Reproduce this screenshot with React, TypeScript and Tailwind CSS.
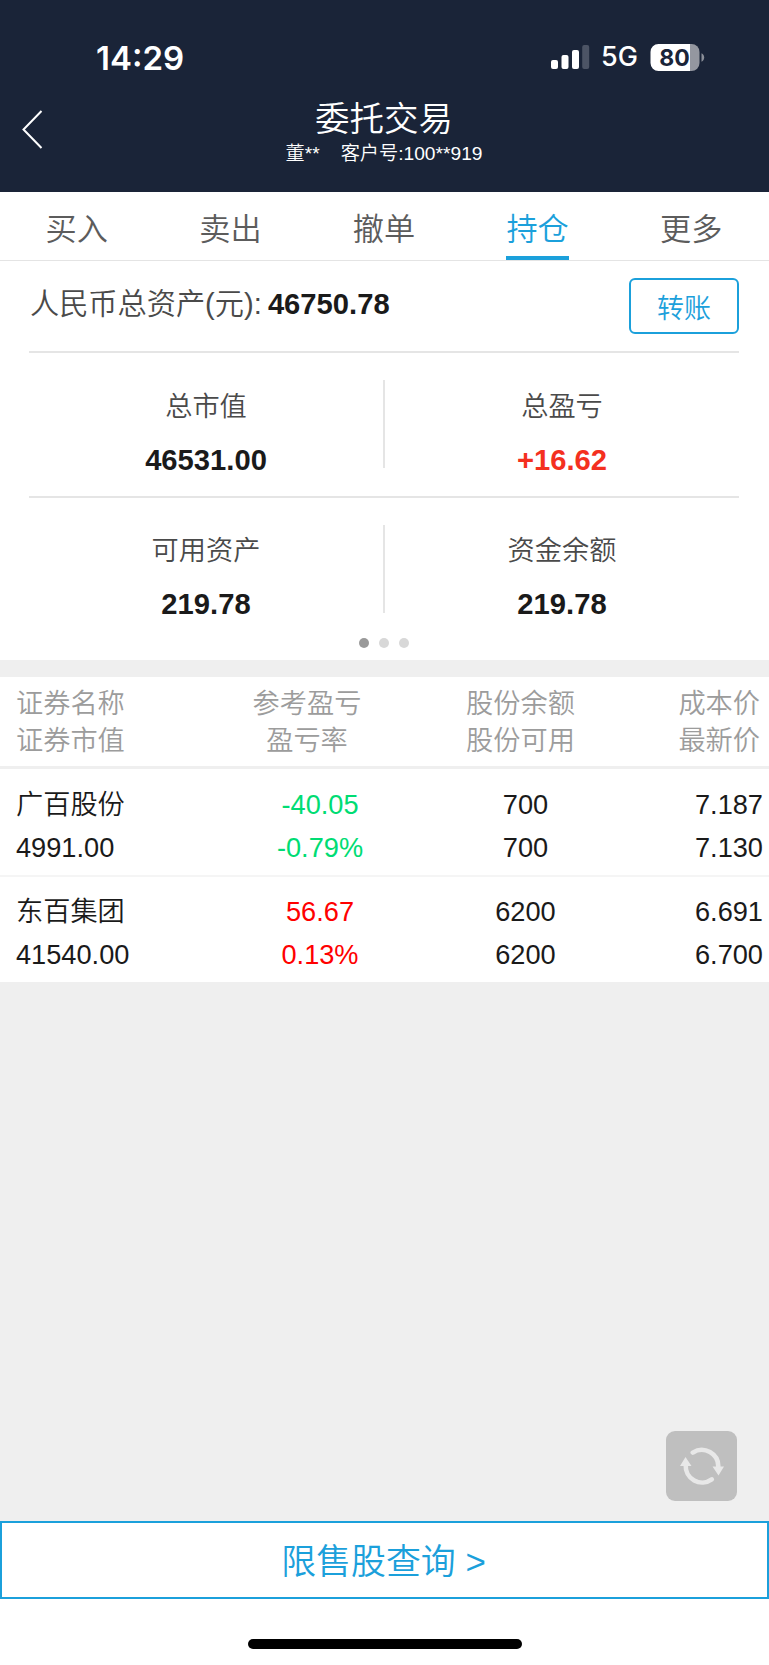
import React from 'react';

const tabs = ['买入', '卖出', '撤单', '持仓', '更多'];

const holdings = [
  { name: '广百股份', value: '4991.00', pnl: '-40.05', rate: '-0.79%', shares: '700', usable: '700', cost: '7.187', price: '7.130', color: 'text-[#00dc73]' },
  { name: '东百集团', value: '41540.00', pnl: '56.67', rate: '0.13%', shares: '6200', usable: '6200', cost: '6.691', price: '6.700', color: 'text-[#ff0000]' },
];

function StatusBar() {
  return (
    <div className="flex h-[92px] items-start justify-between pl-[96px] pr-[64px] pt-[37px] font-['Inter',sans-serif] text-white">
      <div className="text-[33px] font-semibold leading-[42px]">14:29</div>
      <div className="flex h-[40px] items-center">
        <svg width="39" height="26" viewBox="0 0 39 26" className="mr-[11px]">
          <rect x="0" y="16" width="7" height="9" rx="2" fill="#fff" />
          <rect x="10.5" y="11" width="7" height="14" rx="2" fill="#fff" />
          <rect x="21" y="6" width="7" height="19" rx="2" fill="#fff" />
          <rect x="31.2" y="1" width="7" height="24" rx="2" fill="#4c5465" />
        </svg>
        <div className="w-[49px] text-[27px] font-medium leading-[44px]">5G</div>
        <div className="relative h-[27px] w-[55px]">
          <svg width="55" height="27" viewBox="0 0 55 27" className="block">
            <path d="M40 0h1.500a8 8 0 0 1 8 8v11a8 8 0 0 1-8 8H39V0z" fill="#9497a0" />
            <path d="M8.500 0H40v27H8.500a8 8 0 0 1-8-8V8a8 8 0 0 1 8-8z" fill="#fff" />
            <path d="M51.500 9.200c3.600 1.300 3.600 7.300 0 8.600z" fill="#8a8e98" />
          </svg>
          <div className="absolute left-0 top-0 w-[49px] text-center text-[23px] font-bold leading-[28px] text-[#1a2438]">80</div>
        </div>
      </div>
    </div>
  );
}

function Stat({ label, value, red = false }: { label: string; value: string; red?: boolean }) {
  return (
    <div className="flex-1 pt-[7px] text-center">
      <div className="h-[40px] text-[27.200px] font-[350] leading-[40px] text-[#4a4a4a]">{label}</div>
      <div className={`mt-[13px] h-[40px] text-[29.200px] font-bold leading-[40px] ${red ? 'text-[#f4301f]' : 'text-[#1a1a1a]'}`}>{value}</div>
    </div>
  );
}

export default function App() {
  return (
    <div className="flex h-[1665px] w-[769px] flex-col overflow-hidden bg-white font-['Liberation_Sans','Noto_Sans_CJK_SC',sans-serif]">
      <header className="h-[192px] shrink-0 bg-[#1a2438] text-white">
        <StatusBar />
        <div className="grid grid-cols-[80px_1fr_80px]">
          <svg width="24" height="42" viewBox="0 0 24 42" className="ml-[20px] mt-[17px]" fill="none" stroke="#fff" strokeWidth="2">
            <path d="M21.500 2L3.500 20.500L21.500 39" />
          </svg>
          <div className="flex flex-col items-center pr-px">
            <h1 className="h-[46px] text-[34.500px] font-[350] leading-[55px]">委托交易</h1>
            <div className="flex gap-[21px] text-[19.200px] font-[350] leading-[31px]">
              <span>董**</span>
              <span>客户号:100**919</span>
            </div>
          </div>
        </div>
      </header>

      <nav className="flex h-[69px] shrink-0 border-b border-[#e4e4e4] pr-px">
        {tabs.map((t) => (
          <div key={t} className="flex flex-1 justify-center">
            <div className={`h-[68px] text-[31.200px] font-[350] leading-[76px] ${t === '持仓' ? 'border-b-4 border-[#1ba0db] text-[#1ba0db]' : 'text-[#5c5c5c]'}`}>{t}</div>
          </div>
        ))}
      </nav>

      <section className="h-[399px] shrink-0 pl-[29px] pr-[30px]">
        <div className="flex h-[92px] justify-between border-b-2 border-[#e5e5e5]">
          <div className="flex pl-px pt-[22px] text-[29.200px] leading-[42px]">
            <span className="font-[350] text-[#4a4a4a]">人民币总资产(元):</span>
            <span className="ml-[6px] font-bold text-[#1a1a1a]">46750.78</span>
          </div>
          <button className="mt-[17px] h-[56px] w-[110px] rounded-[6px] border-2 border-[#1ba0db] pt-[5px] text-[27px] font-[350] leading-[40px] text-[#1ba0db]">转账</button>
        </div>
        <div className="flex h-[145px] items-start border-b-2 border-[#e5e5e5] pt-[27px]">
          <Stat label="总市值" value="46531.00" />
          <div className="h-[88px] w-[2px] bg-[#e5e5e5]" />
          <Stat label="总盈亏" value="+16.62" red />
        </div>
        <div className="flex h-[140px] items-start pt-[26px]">
          <Stat label="可用资产" value="219.78" />
          <div className="mt-px h-[88px] w-[2px] bg-[#e5e5e5]" />
          <Stat label="资金余额" value="219.78" />
        </div>
        <div className="flex justify-center gap-[10px]">
          <div className="size-[10px] rounded-full bg-[#999]" />
          <div className="size-[10px] rounded-full bg-[#d8d8d8]" />
          <div className="size-[10px] rounded-full bg-[#d8d8d8]" />
        </div>
      </section>

      <main className="flex flex-1 flex-col bg-[#efefef] pt-[17px]">
        <div className="flex h-[89px] shrink-0 bg-white pl-[16px] pr-[9px] pt-[8px] text-[27.200px] font-[350] leading-[37px] text-[#9c9c9c]">
          <div className="w-[184px]">证券名称<br />证券市值</div>
          <div className="w-[214px] text-center">参考盈亏<br />盈亏率</div>
          <div className="w-[213px] text-center">股份余额<br />股份可用</div>
          <div className="flex-1 text-right">成本价<br />最新价</div>
        </div>
        <div className="mt-[3px]">
          {holdings.map((h, i) => (
            <div key={h.name} className={`flex bg-white pl-[16px] pr-[6px] text-[27.200px] leading-[43px] text-[#1a1a1a] ${i === 0 ? 'h-[108px] border-b-2 border-[#f5f5f5] pt-[14px]' : 'h-[105px] pt-[13px]'}`}>
              <div className="w-[201px]"><div className="h-[43px] font-[350] leading-[44px]">{h.name}</div><div>{h.value}</div></div>
              <div className={`w-[206px] text-center ${h.color}`}>{h.pnl}<br />{h.rate}</div>
              <div className="w-[205px] text-center">{h.shares}<br />{h.usable}</div>
              <div className="flex-1 text-right">{h.cost}<br />{h.price}</div>
            </div>
          ))}
        </div>
        <div className="mb-[20px] ml-auto mr-[32px] mt-auto flex h-[70px] w-[71px] items-center justify-center rounded-[9px] bg-[#bfbfbf]">
          <svg width="44" height="40" viewBox="0 0 44 40" fill="none" stroke="#e8e8e8" strokeWidth="4.6" strokeLinecap="round">
            <path d="M12.800 6.600A16.500 16.500 0 0 1 38.300 21" />
            <path d="M31.800 33.400A16.500 16.500 0 0 1 5.700 19" />
            <path d="M32.500 20.500h11.500l-5.500 9zM0 20h11.500L5.500 11z" fill="#e8e8e8" stroke="none" />
          </svg>
        </div>
      </main>

      <button className="h-[78px] shrink-0 border-2 border-[#1ba0db] bg-white pr-[2px] pt-[3px] text-[34.900px] font-[350] leading-[71px] text-[#1ba0db]">限售股查询 &gt;</button>
      <footer className="flex h-[66px] shrink-0 justify-center pt-[40px]">
        <div className="h-[10px] w-[274px] rounded-full bg-black" />
      </footer>
    </div>
  );
}
